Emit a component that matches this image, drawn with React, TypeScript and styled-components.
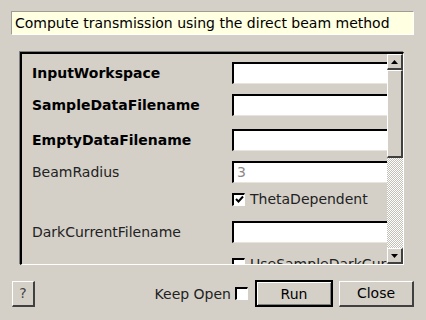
import React from "react";
import styled, { createGlobalStyle } from "styled-components";

const Global = createGlobalStyle`
  html, body { margin: 0; padding: 0; background: #d4d0c8; }
  body { font-family: "DejaVu Sans", "Liberation Sans", sans-serif; font-size: 14px; color: #000; }
`;

const Dialog = styled.div`
  width: 426px;
  height: 320px;
  box-sizing: border-box;
  display: flex;
  flex-direction: column;
  padding: 11px 12px 0 11px;
`;

const Description = styled.div`
  height: 24px;
  box-sizing: border-box;
  background: #ffffe1;
  border-top: 1px solid #a09c94;
  border-left: 1px solid #a09c94;
  border-bottom: 1px solid #fff;
  border-right: 1px solid #fff;
  padding-left: 3px;
  line-height: 22px;
  white-space: nowrap;
`;

const Frame = styled.div`
  margin: 17px 10px 0 9px;
  height: 213px;
  box-sizing: border-box;
  display: flex;
  border-top: 2px solid #000;
  border-left: 2px solid #000;
  border-bottom: 1px solid #fff;
  border-right: 1px solid #fff;
  box-shadow: -1px -1px 0 #808080;
`;

const Viewport = styled.div`
  flex: 1;
  overflow: hidden;
  padding: 8px 0 0 10px;
`;

const Row = styled.div<{ $top: number }>`
  display: grid;
  grid-template-columns: 200px 180px;
  align-items: center;
  height: 22px;
  margin-top: ${(p) => p.$top}px;
  &:first-child { margin-top: 0; }
`;

const Label = styled.span<{ $bold?: boolean }>`
  font-weight: ${(p) => (p.$bold ? 700 : 400)};
  color: ${(p) => (p.$bold ? "#000" : "#222")};
  white-space: nowrap;
`;

const Input = styled.div<{ $muted?: boolean }>`
  height: 22px;
  box-sizing: border-box;
  background: #fff;
  border-top: 2px solid #000;
  border-left: 2px solid #000;
  border-bottom: 1px solid #e8e4dc;
  border-right: 1px solid #e8e4dc;
  padding-left: 3px;
  line-height: 19px;
  color: ${(p) => (p.$muted ? "#8a8a8a" : "#000")};
`;

const CheckLine = styled.label`
  display: flex;
  align-items: center;
  gap: 5px;
  white-space: nowrap;
  color: #222;
`;

const Box = styled.span`
  width: 13px;
  height: 13px;
  box-sizing: border-box;
  background: #fff;
  border-top: 2px solid #000;
  border-left: 2px solid #000;
  border-bottom: 1px solid #fff;
  border-right: 1px solid #fff;
  display: inline-flex;
  align-items: center;
  justify-content: center;
  flex: none;
`;

const ScrollBar = styled.div`
  width: 16px;
  display: flex;
  flex-direction: column;
`;

const Raised = styled.div<{ $h?: number }>`
  box-sizing: border-box;
  height: ${(p) => p.$h ?? 16}px;
  background: #d4d0c8;
  border-top: 1px solid #fff;
  border-left: 1px solid #fff;
  border-bottom: 2px solid #404040;
  border-right: 2px solid #404040;
  display: flex;
  align-items: center;
  justify-content: center;
  flex: none;
`;

const Trough = styled.div`
  flex: 1;
  background: repeating-conic-gradient(#fff 0 25%, #c4c0b8 0 50%) 0 0 / 2px 2px;
`;

const Footer = styled.div`
  display: flex;
  align-items: center;
  margin-top: 15px;
  height: 27px;
`;

const Button = styled.button<{ $w: number; $default?: boolean }>`
  width: ${(p) => p.$w}px;
  height: ${(p) => (p.$default ? 27 : 26)}px;
  box-sizing: border-box;
  background: #d4d0c8;
  font-family: "DejaVu Sans", "Liberation Sans", sans-serif;
  font-size: 14px;
  color: #000;
  padding: 0;
  border-top: 1px solid #fff;
  border-left: 1px solid #fff;
  border-bottom: 2px solid #404040;
  border-right: 2px solid #404040;
  ${(p) =>
    p.$default
      ? "border: 2px solid #000; box-shadow: inset 1px 1px #fff, inset -1px -1px #808080;"
      : ""}
`;

const HelpButton = styled(Button)`
  margin-left: 1px;
  color: #444;
`;

const CloseButton = styled(Button)`
  margin-left: 6px;
`;

const Spacer = styled.div`
  flex: 1;
`;

const KeepOpen = styled.label`
  display: flex;
  align-items: center;
  gap: 4px;
  margin-right: 7px;
  color: #222;
`;

const Tri = ({ down }: { down?: boolean }) => (
  <svg width="7" height="4" viewBox="0 0 7 4">
    <polygon points={down ? "0,0 7,0 3.5,4" : "0,4 7,4 3.5,0"} fill="#000" />
  </svg>
);

const Check = () => (
  <svg width="9" height="9" viewBox="0 0 9 9">
    <path d="M1 4 L3.5 6.5 L8 1.5" stroke="#000" strokeWidth="2" fill="none" />
  </svg>
);

export default function App() {
  return (
    <>
      <Global />
      <Dialog>
        <Description>Compute transmission using the direct beam method</Description>
        <Frame>
          <Viewport>
            <Row $top={0}>
              <Label $bold>InputWorkspace</Label>
              <Input />
            </Row>
            <Row $top={10}>
              <Label $bold>SampleDataFilename</Label>
              <Input />
            </Row>
            <Row $top={13}>
              <Label $bold>EmptyDataFilename</Label>
              <Input />
            </Row>
            <Row $top={10}>
              <Label>BeamRadius</Label>
              <Input $muted>3</Input>
            </Row>
            <Row $top={5}>
              <span />
              <CheckLine>
                <Box>
                  <Check />
                </Box>
                ThetaDependent
              </CheckLine>
            </Row>
            <Row $top={11}>
              <Label>DarkCurrentFilename</Label>
              <Input />
            </Row>
            <Row $top={10}>
              <span />
              <CheckLine>
                <Box />
                UseSampleDarkCurrent
              </CheckLine>
            </Row>
          </Viewport>
          <ScrollBar>
            <Raised $h={16}>
              <Tri />
            </Raised>
            <Raised $h={88} />
            <Trough />
            <Raised $h={16}>
              <Tri down />
            </Raised>
          </ScrollBar>
        </Frame>
        <Footer>
          <HelpButton $w={23}>?</HelpButton>
          <Spacer />
          <KeepOpen>
            Keep Open
            <Box />
          </KeepOpen>
          <Button $w={78} $default>
            Run
          </Button>
          <CloseButton $w={75}>Close</CloseButton>
        </Footer>
      </Dialog>
    </>
  );
}
